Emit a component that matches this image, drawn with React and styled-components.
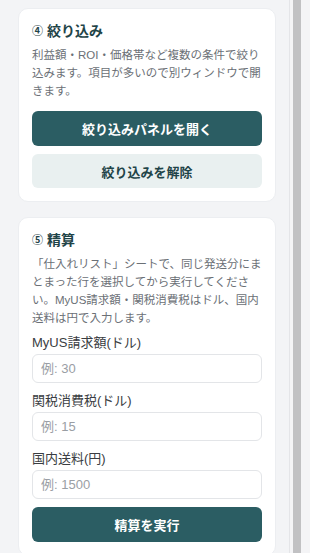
import styled, { createGlobalStyle } from 'styled-components'

const Global = createGlobalStyle`
  html, body {
    margin: 0;
    padding: 0;
    background: #f3f4f6;
  }
  * {
    box-sizing: border-box;
  }
`

const Frame = styled.div`
  display: flex;
  width: 310px;
  height: 553px;
  overflow: hidden;
  font-family: 'Liberation Sans', 'Noto Sans CJK JP', sans-serif;
  background: #f3f4f6;
`

const Main = styled.div`
  width: 290px;
  flex-shrink: 0;
  display: flex;
  flex-direction: column;
  gap: 15px;
  padding: 8px 13px 0 18px;
  border-right: 1px solid #e4e5e8;
`

const Scrollbar = styled.div`
  flex: 1;
  display: flex;
  padding-left: 3px;
  background: #f4f4f6;
`

const Thumb = styled.div`
  width: 8px;
  height: 100%;
  background: #c1c1c3;
`

const Card = styled.section`
  background: #fff;
  border: 1px solid #eceef1;
  border-radius: 10px;
  padding: 13px 13px 13px;
  display: flex;
  flex-direction: column;
`

const Title = styled.h2`
  margin: 0 0 6px;
  display: flex;
  align-items: center;
  gap: 4px;
  font-size: 14px;
  line-height: 18px;
  font-weight: 700;
  color: #1f4448;
`

const Num = styled.span`
  font-size: 11px;
  font-weight: 700;
`

const Desc = styled.p`
  margin: 0 0 ${(p) => p.$after}px;
  font-size: 11.5px;
  line-height: 18px;
  color: #6b7076;
`

const Button = styled.button`
  width: 100%;
  height: ${(p) => p.$h || 35}px;
  margin-top: ${(p) => p.$mt || 0}px;
  border: none;
  border-radius: 6px;
  font-family: inherit;
  font-size: 13px;
  font-weight: 700;
  cursor: pointer;
  background: ${(p) => (p.$ghost ? '#e9f0f0' : '#2b5d63')};
  color: ${(p) => (p.$ghost ? '#1f4448' : '#fff')};
`

const Stack = styled.div`
  display: flex;
  flex-direction: column;
  gap: 8px;
`

const Fields = styled.div`
  display: flex;
  flex-direction: column;
  gap: 10px;
`

const Field = styled.label`
  display: flex;
  flex-direction: column;
  gap: 3px;
`

const LabelText = styled.span`
  font-size: 13px;
  line-height: 16px;
  color: #3a3d42;
`

const Input = styled.input`
  height: 29px;
  width: 100%;
  border: 1px solid #e3e5e8;
  border-radius: 6px;
  padding: 0 8px;
  font-family: inherit;
  font-size: 13px;
  color: #333;
  background: #fff;
  outline: none;
  &::placeholder {
    color: #9a9ea4;
  }
`

const fields = [
  { label: 'MyUS請求額(ドル)', ph: '例: 30' },
  { label: '関税消費税(ドル)', ph: '例: 15' },
  { label: '国内送料(円)', ph: '例: 1500' },
]

export default function App() {
  return (
    <Frame>
      <Global />
      <Main>
        <Card>
          <Title>
            <Num>④</Num>絞り込み
          </Title>
          <Desc $after={11}>
            利益額・ROI・価格帯など複数の条件で絞り込みます。項目が多いので別ウィンドウで開きます。
          </Desc>
          <Stack>
            <Button>絞り込みパネルを開く</Button>
            <Button $ghost $h={34}>
              絞り込みを解除
            </Button>
          </Stack>
        </Card>
        <Card>
          <Title>
            <Num>⑤</Num>精算
          </Title>
          <Desc $after={8}>
            「仕入れリスト」シートで、同じ発送分にまとまった行を選択してから実行してください。MyUS請求額・関税消費税はドル、国内送料は円で入力します。
          </Desc>
          <Fields>
            {fields.map((f) => (
              <Field key={f.label}>
                <LabelText>{f.label}</LabelText>
                <Input placeholder={f.ph} />
              </Field>
            ))}
          </Fields>
          <Button $mt={8}>精算を実行</Button>
        </Card>
      </Main>
      <Scrollbar>
        <Thumb />
      </Scrollbar>
    </Frame>
  )
}
